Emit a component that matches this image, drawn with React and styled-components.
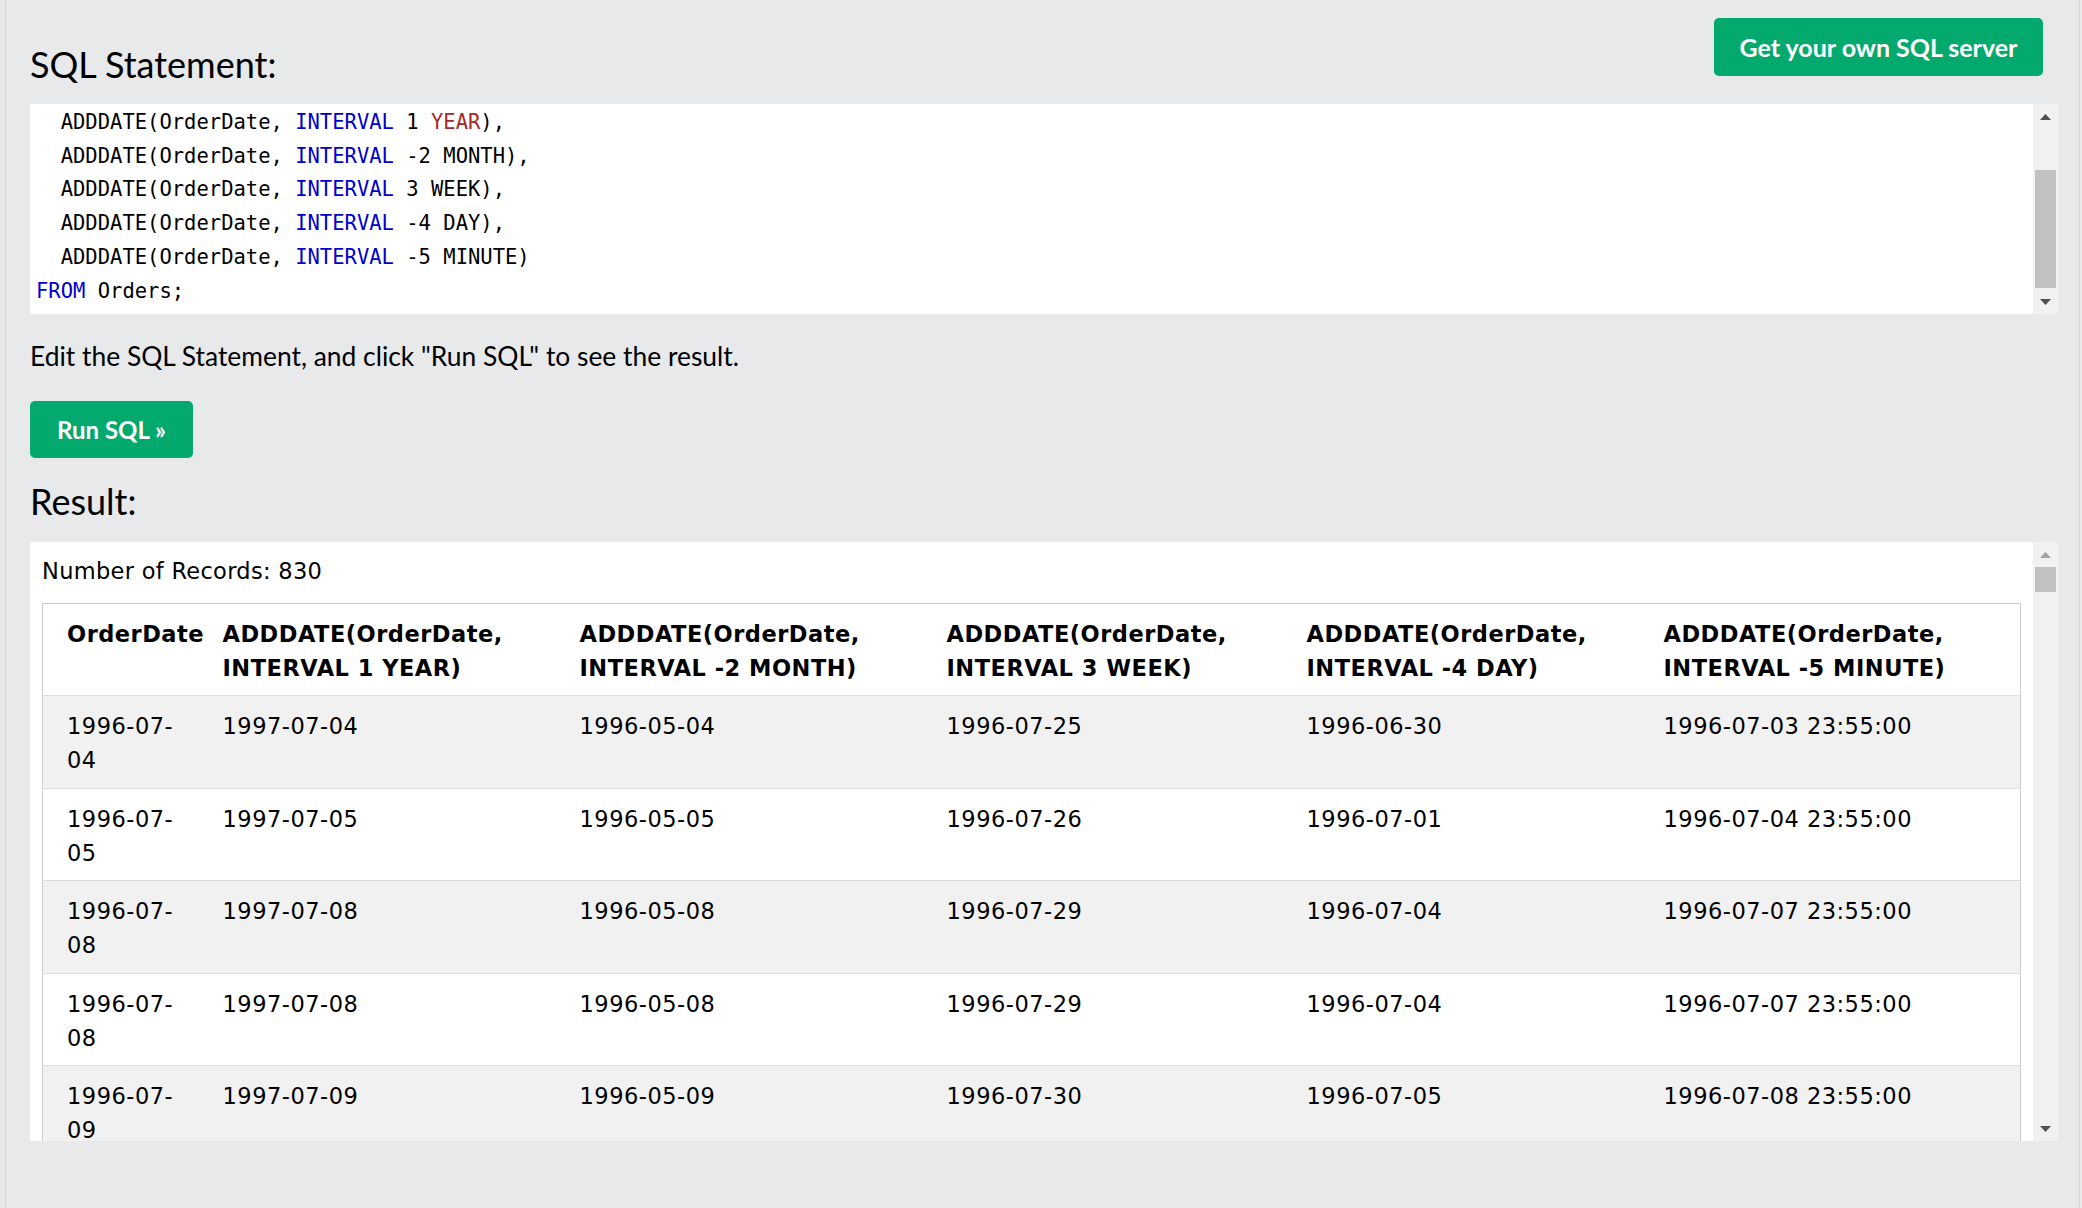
import React from "react";
import styled, { createGlobalStyle } from "styled-components";

const GlobalStyle = createGlobalStyle`
  html, body {
    margin: 0;
    padding: 0;
    background: #e7e9eb;
  }
  body {
    font-family: "DejaVu Sans", Verdana, sans-serif;
    color: #000;
    overflow: hidden;
  }
`;

const codeLines = [
  [{ t: "  ADDDATE(OrderDate, " }, { t: "INTERVAL", k: "kw" }, { t: " 1 " }, { t: "YEAR", k: "unit" }, { t: ")," }],
  [{ t: "  ADDDATE(OrderDate, " }, { t: "INTERVAL", k: "kw" }, { t: " -2 MONTH)," }],
  [{ t: "  ADDDATE(OrderDate, " }, { t: "INTERVAL", k: "kw" }, { t: " 3 WEEK)," }],
  [{ t: "  ADDDATE(OrderDate, " }, { t: "INTERVAL", k: "kw" }, { t: " -4 DAY)," }],
  [{ t: "  ADDDATE(OrderDate, " }, { t: "INTERVAL", k: "kw" }, { t: " -5 MINUTE)" }],
  [{ t: "FROM", k: "kw" }, { t: " Orders;" }],
];

const columns = [
  { title: "OrderDate", width: 168 },
  { title: "ADDDATE(OrderDate, INTERVAL 1 YEAR)", width: 357 },
  { title: "ADDDATE(OrderDate, INTERVAL -2 MONTH)", width: 367 },
  { title: "ADDDATE(OrderDate, INTERVAL 3 WEEK)", width: 360 },
  { title: "ADDDATE(OrderDate, INTERVAL -4 DAY)", width: 357 },
  { title: "ADDDATE(OrderDate, INTERVAL -5 MINUTE)" },
];

const rows = [
  ["1996-07-04", "1997-07-04", "1996-05-04", "1996-07-25", "1996-06-30", "1996-07-03 23:55:00"],
  ["1996-07-05", "1997-07-05", "1996-05-05", "1996-07-26", "1996-07-01", "1996-07-04 23:55:00"],
  ["1996-07-08", "1997-07-08", "1996-05-08", "1996-07-29", "1996-07-04", "1996-07-07 23:55:00"],
  ["1996-07-08", "1997-07-08", "1996-05-08", "1996-07-29", "1996-07-04", "1996-07-07 23:55:00"],
  ["1996-07-09", "1997-07-09", "1996-05-09", "1996-07-30", "1996-07-05", "1996-07-08 23:55:00"],
];

const Arrow = ({ up, color }) => (
  <svg width="11" height="6" viewBox="0 0 11 6">
    <path d={up ? "M0 6 L5.5 0 L11 6 Z" : "M0 0 L5.5 6 L11 0 Z"} fill={color} />
  </svg>
);

const ScrollBar = ({ thumb, atEnd, upColor = "#505050", downColor = "#505050" }) => (
  <Bar>
    <ArrowButton><Arrow up color={upColor} /></ArrowButton>
    <Track $atEnd={atEnd}>
      <Thumb $size={thumb} />
    </Track>
    <ArrowButton><Arrow color={downColor} /></ArrowButton>
  </Bar>
);

const App = () => {
  return (
    <>
      <GlobalStyle />
      <Frame>
        <TopRow>
          <Heading>SQL Statement:</Heading>
          <GreenButton $wide>Get your own SQL server</GreenButton>
        </TopRow>

        <CodeBox>
          <CodeArea>
            {codeLines.map((line, i) => (
              <CodeLine key={i}>
                {line.map((part, j) => (
                  <Token key={j} $kind={part.k}>{part.t}</Token>
                ))}
              </CodeLine>
            ))}
          </CodeArea>
          <ScrollBar thumb={118} atEnd />
        </CodeBox>

        <Hint>Edit the SQL Statement, and click "Run SQL" to see the result.</Hint>
        <GreenButton>Run SQL »</GreenButton>

        <ResultHeading>Result:</ResultHeading>
        <ResultBox>
          <ResultArea>
            <Count>Number of Records: 830</Count>
            <Table>
              <colgroup>
                {columns.map((c, i) => (
                  <col key={i} style={c.width ? { width: c.width } : undefined} />
                ))}
              </colgroup>
              <tbody>
                <tr>
                  {columns.map((c, i) => (
                    <th key={i}>{c.title}</th>
                  ))}
                </tr>
                {rows.map((r, i) => (
                  <tr key={i}>
                    {r.map((v, j) => (
                      <td key={j}>{v}</td>
                    ))}
                  </tr>
                ))}
              </tbody>
            </Table>
          </ResultArea>
          <ScrollBar thumb={25} upColor="#a3a3a3" />
        </ResultBox>
      </Frame>
    </>
  );
};

const Frame = styled.div`
  box-sizing: border-box;
  min-height: 100vh;
  margin: 0 2px 0 5px;
  padding: 0 21px 0 24px;
  border-left: 1px solid #d4d6d8;
  border-right: 1px solid #d4d6d8;
`;

const TopRow = styled.div`
  display: flex;
  justify-content: space-between;
  align-items: flex-start;
`;

const Heading = styled.h2`
  margin: 43px 0 0;
  font: 400 36px/43px Lato, "Segoe UI", sans-serif;
  color: #000;
`;

const ResultHeading = styled(Heading)`
  margin-top: 22px;
`;

const GreenButton = styled.button`
  display: flex;
  align-items: center;
  justify-content: center;
  box-sizing: border-box;
  border: none;
  border-radius: 5px;
  background: #04aa6d;
  color: #fff;
  font: 700 ${(p) => (p.$wide ? "25px" : "24px")} Lato, "Source Sans Pro", sans-serif;
  width: ${(p) => (p.$wide ? "329px" : "163px")};
  height: ${(p) => (p.$wide ? "58px" : "57px")};
  margin: ${(p) => (p.$wide ? "18px 15px 0 0" : "26px 0 0")};
  padding: 0;
  cursor: pointer;
`;

const CodeBox = styled.div`
  display: flex;
  height: 210px;
  margin-top: 18px;
`;

const CodeArea = styled.div`
  flex: 1;
  background: #fff;
  padding: 2px 6px 0;
  font: 400 20.5px/33.7px "DejaVu Sans Mono", "Liberation Mono", monospace;
  color: #000;
  overflow: hidden;
`;

const CodeLine = styled.div`
  white-space: pre;
`;

const Token = styled.span`
  color: ${(p) => (p.$kind === "kw" ? "#0000cd" : p.$kind === "unit" ? "#a52a2a" : "#000")};
`;

const Bar = styled.div`
  width: 25px;
  background: #f1f1f1;
  display: flex;
  flex-direction: column;
`;

const ArrowButton = styled.div`
  height: 25px;
  display: flex;
  align-items: center;
  justify-content: center;
`;

const Track = styled.div`
  flex: 1;
  display: flex;
  flex-direction: column;
  justify-content: ${(p) => (p.$atEnd ? "flex-end" : "flex-start")};
  padding: 0 2px ${(p) => (p.$atEnd ? "1px" : "0")};
`;

const Thumb = styled.div`
  height: ${(p) => p.$size}px;
  background: #c1c1c1;
`;

const Hint = styled.p`
  margin: 24px 0 0;
  font: 400 26.4px/37px Lato, "Segoe UI", sans-serif;
`;

const ResultBox = styled.div`
  display: flex;
  height: 599px;
  margin-top: 19px;
`;

const ResultArea = styled.div`
  flex: 1;
  background: #fff;
  overflow: hidden;
  padding: 13px 12px 0;
`;

const Count = styled.div`
  font-size: 22.5px;
  line-height: 33.75px;
  letter-spacing: 0.3px;
  margin-bottom: 14px;
`;

const Table = styled.table`
  width: 100%;
  table-layout: fixed;
  border-collapse: collapse;
  border: 1px solid #ccc;
  font-size: 22.5px;
  line-height: 33.75px;
  letter-spacing: 0.5px;

  tr {
    border-bottom: 1px solid #ddd;
    background: #fff;
  }
  tr:nth-child(even) {
    background: #f1f1f1;
  }
  th, td {
    padding: 14px 12px 10px;
    text-align: left;
    vertical-align: top;
  }
  th {
    font-weight: 700;
  }
  th:first-child, td:first-child {
    padding-left: 24px;
    padding-right: 16px;
  }
`;

export default App;
